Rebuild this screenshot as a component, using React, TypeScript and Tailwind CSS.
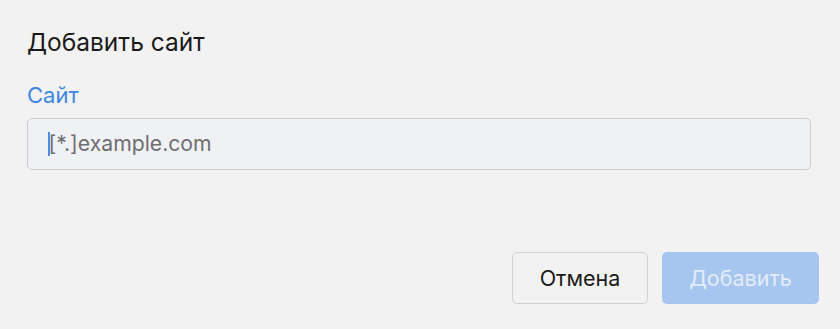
import React, { useState } from 'react';

export default function App() {
  const [site, setSite] = useState('');

  return (
    <div
      className="w-[840px] h-[329px] bg-[#f2f2f2] flex flex-col pl-[27px] pr-[21px] pt-[27px]"
      style={{ fontFamily: 'Inter, "Noto Sans", sans-serif' }}
    >
      <h2 className="text-[24.5px] leading-[30px] text-[#1a1a1a] font-normal">Добавить сайт</h2>

      <label className="mt-[25px] text-[22px] leading-[26px] text-[#3d86e0]">Сайт</label>

      <div className="mt-[10px] mr-[8px] h-[52px] rounded-[5px] border border-[#c9cdd3] bg-[#f0f1f3] flex items-center pl-[20px]">
        <span className="w-[1.5px] h-[24px] bg-[#4a8ee6] mr-[-1px]" />
        <input
          value={site}
          onChange={(e) => setSite(e.target.value)}
          placeholder="[*.]example.com"
          className="flex-1 bg-transparent outline-none text-[21.2px] text-[#1a1a1a] placeholder:text-[#6e6e73]"
        />
      </div>

      <div className="mt-auto mb-[25px] flex justify-end gap-[14px]">
        <button className="w-[136px] h-[52px] rounded-[5px] border border-[#cfd1d4] bg-[#f2f2f2] text-[21.5px] text-[#1a1a1a]">
          Отмена
        </button>
        <button
          disabled
          className="w-[157px] h-[52px] rounded-[5px] bg-[#a6c6ef] text-[21.5px] text-[#e3ecf8]"
        >
          Добавить
        </button>
      </div>
    </div>
  );
}
